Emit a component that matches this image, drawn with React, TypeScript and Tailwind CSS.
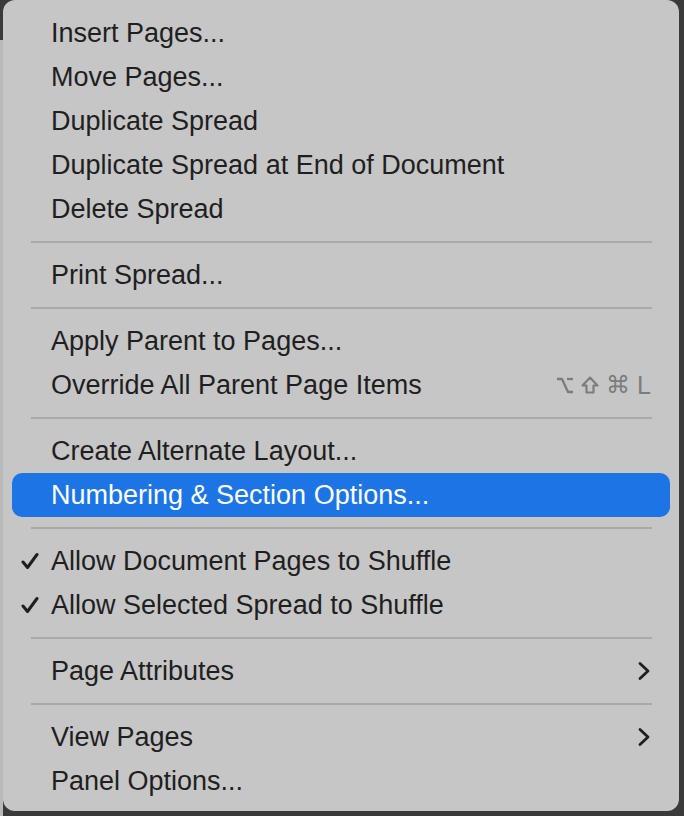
import React from 'react';

type Item =
  | { kind: 'sep' }
  | {
      kind: 'item';
      label: string;
      checked?: boolean;
      active?: boolean;
      shortcut?: boolean;
      submenu?: boolean;
    };

const items: Item[] = [
  { kind: 'item', label: 'Insert Pages...' },
  { kind: 'item', label: 'Move Pages...' },
  { kind: 'item', label: 'Duplicate Spread' },
  { kind: 'item', label: 'Duplicate Spread at End of Document' },
  { kind: 'item', label: 'Delete Spread' },
  { kind: 'sep' },
  { kind: 'item', label: 'Print Spread...' },
  { kind: 'sep' },
  { kind: 'item', label: 'Apply Parent to Pages...' },
  { kind: 'item', label: 'Override All Parent Page Items', shortcut: true },
  { kind: 'sep' },
  { kind: 'item', label: 'Create Alternate Layout...' },
  { kind: 'item', label: 'Numbering & Section Options...', active: true },
  { kind: 'sep' },
  { kind: 'item', label: 'Allow Document Pages to Shuffle', checked: true },
  { kind: 'item', label: 'Allow Selected Spread to Shuffle', checked: true },
  { kind: 'sep' },
  { kind: 'item', label: 'Page Attributes', submenu: true },
  { kind: 'sep' },
  { kind: 'item', label: 'View Pages', submenu: true },
  { kind: 'item', label: 'Panel Options...' },
];

function Check() {
  return (
    <svg width="18" height="18" viewBox="0 0 18 18" fill="none">
      <path d="M2 10 L6.5 15.5 L16 2.5" stroke="#1f1f1f" strokeWidth="3" strokeLinecap="round" strokeLinejoin="round" />
    </svg>
  );
}

function Chevron() {
  return (
    <svg width="12" height="20" viewBox="0 0 12 20" fill="none">
      <path d="M2 2.5 L10 10 L2 17.5" stroke="#1f1f1f" strokeWidth="2.8" strokeLinecap="round" strokeLinejoin="round" />
    </svg>
  );
}

function Shortcut() {
  const c = '#7c7c7c';
  return (
    <span className="flex items-center gap-[7px] text-[#7c7c7c]">
      {/* option */}
      <svg width="18" height="17" viewBox="0 0 18 17" fill="none">
        <path d="M1 2 H6 L12 15 H17" stroke={c} strokeWidth="2.3" strokeLinejoin="round" />
        <path d="M11 2 H17" stroke={c} strokeWidth="2.3" />
      </svg>
      {/* shift */}
      <svg width="18" height="18" viewBox="0 0 18 18" fill="none">
        <path d="M9 1.5 L16.5 9.5 H12.5 V16.5 H5.5 V9.5 H1.5 Z" stroke={c} strokeWidth="2.1" strokeLinejoin="round" />
      </svg>
      {/* command */}
      <span className="text-[24px] leading-none" style={{ fontFamily: '"DejaVu Sans", sans-serif' }}>
        ⌘
      </span>
      <span className="text-[25px] leading-none">L</span>
    </span>
  );
}

function MenuRow({ item }: { item: Extract<Item, { kind: 'item' }> }) {
  return (
    <div
      className={
        'relative flex h-[44px] items-center rounded-[10px] pl-[39px] pr-[19px] ' +
        (item.active ? 'bg-[#1d75e5] text-white' : 'text-[#1f1f1f]')
      }
    >
      {item.checked && (
        <span className="absolute left-[9px] top-[13px]">
          <Check />
        </span>
      )}
      <span className="flex-1 whitespace-nowrap">{item.label}</span>
      {item.shortcut && <Shortcut />}
      {item.submenu && (
        <span className="flex items-center pr-[1px]">
          <Chevron />
        </span>
      )}
    </div>
  );
}

export default function App() {
  return (
    <div className="h-[816px] w-[684px] overflow-hidden bg-[#3a3a3a]">
      <div className="flex h-full">
        <div className="flex w-[3px] flex-col">
          <div className="h-[40px] bg-[#3a3a3a]" />
          <div className="flex-1 bg-[#b9b9b9]" />
        </div>
        <div
          className="w-[676px] self-start rounded-[12px] bg-[#c6c6c6] px-[9px] pt-[11px] pb-[8px] text-[27px] leading-none"
          style={{ fontFamily: '"Liberation Sans", Arial, sans-serif' }}
        >
          {items.map((item, i) =>
            item.kind === 'sep' ? (
              <div key={i} className="flex h-[22px] items-center pl-[19px] pr-[18px]">
                <div className="h-[2px] w-full bg-[#a9a9a9]" />
              </div>
            ) : (
              <MenuRow key={i} item={item} />
            ),
          )}
        </div>
      </div>
    </div>
  );
}
